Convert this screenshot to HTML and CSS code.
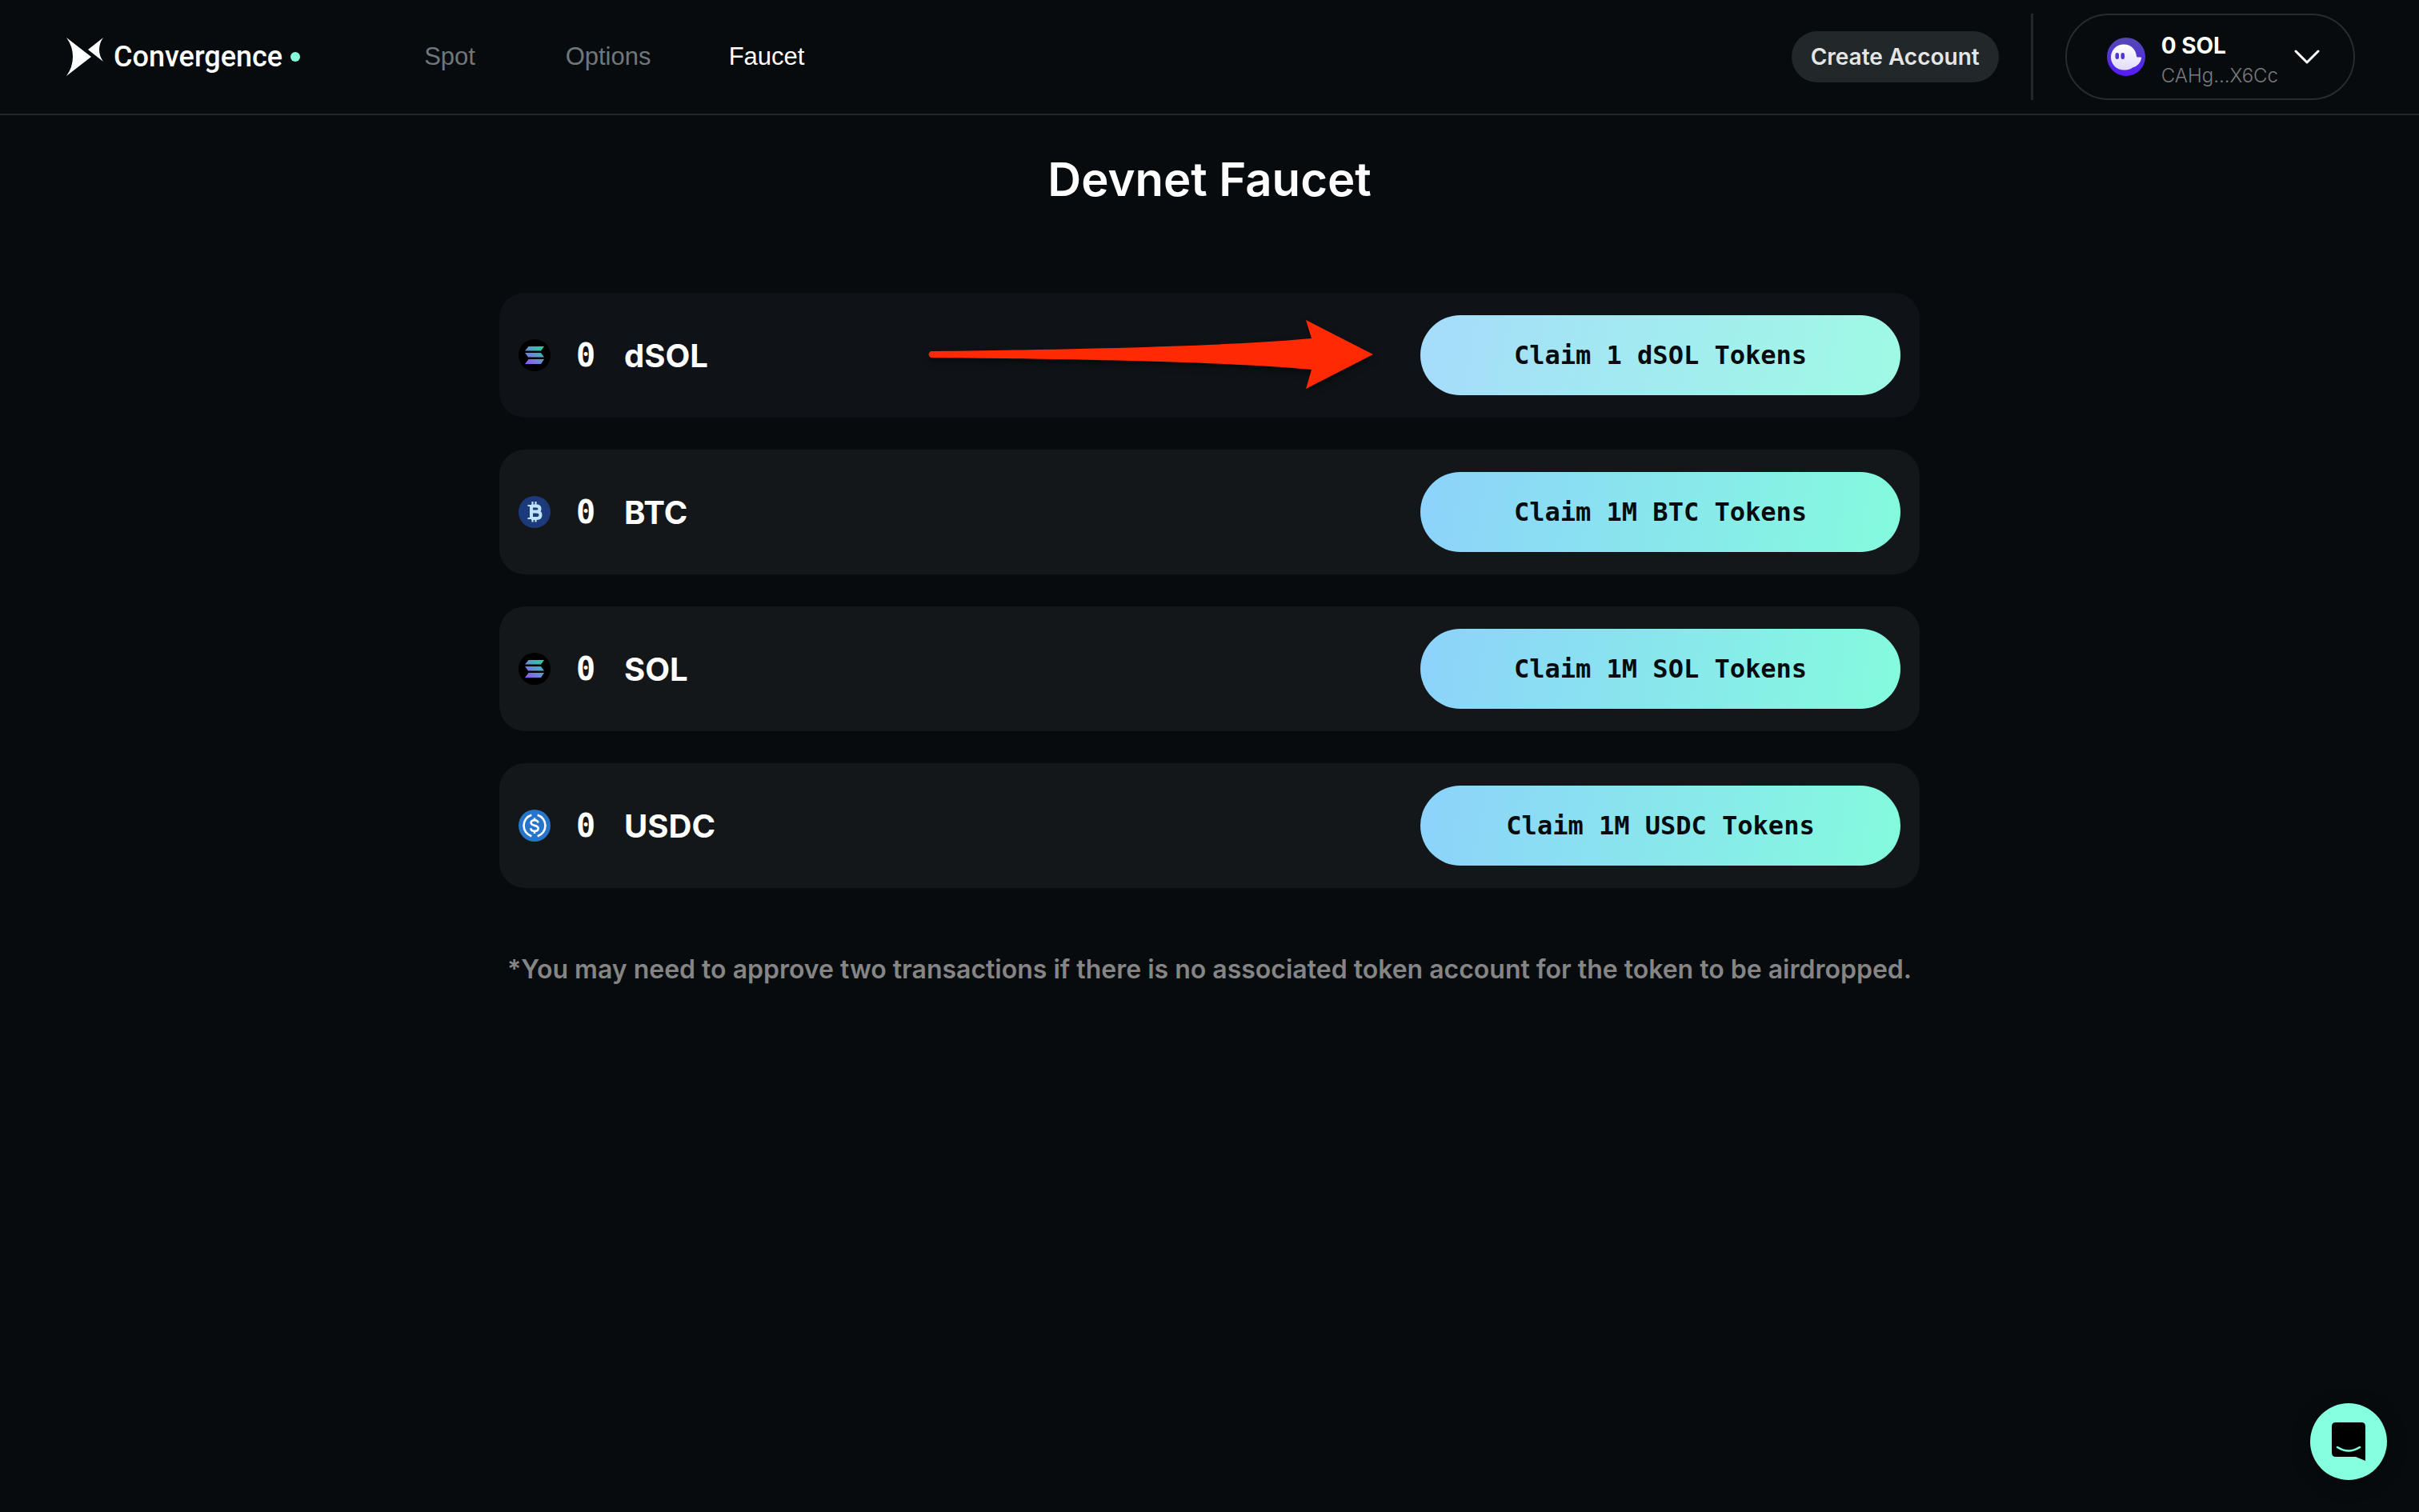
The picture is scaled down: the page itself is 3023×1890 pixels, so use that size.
FILE: index.html
```html
<!DOCTYPE html>
<html lang="en">
<head>
<meta charset="utf-8">
<meta name="viewport" content="width=device-width, initial-scale=1">
<title>Convergence – Faucet</title>
<link rel="stylesheet" href="styles.css">
</head>
<body>
<svg class="defs" width="0" height="0" aria-hidden="true">
  <defs>
    <linearGradient id="sol-grad" gradientUnits="userSpaceOnUse" x1="30" y1="8" x2="10" y2="32">
      <stop offset="0" stop-color="#19d99b"/><stop offset=".5" stop-color="#6393cf"/><stop offset="1" stop-color="#8f53f4"/>
    </linearGradient>
    <symbol id="icon-sol" viewBox="0 0 40 40">
      <circle cx="20" cy="20" r="20" fill="#000"/>
      <path fill="url(#sol-grad)" d="M12.500 9H32l-4 5.500H8zM8 17h20l4 5.500H12zM12.500 25H32l-4 6H8z"/>
    </symbol>
  </defs>
</svg>
<header class="header">
  <a class="brand" href="#">
    <svg class="brand-mark" viewBox="0 0 46 48" aria-hidden="true">
      <path fill="#fff" d="M0 0 31 24 0 48Q8 37 8 24T0 0zM46 0 27 15 46 30Q41 23 41 15T46 0z"/>
    </svg>
    <span class="brand-name">Convergence</span>
    <span class="brand-dot"></span>
  </a>
  <nav class="nav">
    <a class="nav-link" href="#">Spot</a>
    <a class="nav-link" href="#">Options</a>
    <a class="nav-link nav-link-active" href="#">Faucet</a>
  </nav>
  <div class="account">
    <button class="create-button" type="button">Create Account</button>
    <span class="divider"></span>
    <button class="wallet" type="button">
      <svg class="wallet-icon" viewBox="0 0 48 48" aria-hidden="true">
        <defs>
          <linearGradient id="wallet-bg" x1="0" y1="0" x2="0" y2="1"><stop offset="0" stop-color="#534bb1"/><stop offset="1" stop-color="#551bf9"/></linearGradient>
          <linearGradient id="wallet-ghost" x1="0" y1="0" x2="0" y2="1"><stop offset="0" stop-color="#fff"/><stop offset="1" stop-color="#e2dbfc"/></linearGradient>
        </defs>
        <circle cx="24" cy="24" r="24" fill="url(#wallet-bg)"/>
        <path fill="url(#wallet-ghost)" d="M21 8.500C31 8.500 36.500 16 37 23.500q.200 1 1.200 1h3.800q1.300 0 1.100 1.300C42 32 37 36.500 32.500 37.200 29 40 25 40.500 21.500 40.500 11.500 40.500 5 33 5 24.500S11.500 8.500 21 8.500z"/>
        <rect x="10.500" y="19" width="4.500" height="8" rx="2.200" fill="#5335d6"/>
        <rect x="17.500" y="19" width="4.500" height="8" rx="2.200" fill="#5335d6"/>
      </svg>
      <span class="wallet-text">
        <span class="wallet-balance">0 SOL</span>
        <span class="wallet-address">CAHg...X6Cc</span>
      </span>
      <svg class="wallet-chevron" viewBox="0 0 32 18" aria-hidden="true">
        <path d="M2 2 16 16 30 2" fill="none" stroke="#fff" stroke-width="3" stroke-linecap="round" stroke-linejoin="round"/>
      </svg>
    </button>
  </div>
</header>
<main class="faucet">
  <h1 class="title">Devnet Faucet</h1>
  <ul class="tokens">
    <li class="token token-highlight">
      <svg class="token-icon" aria-hidden="true"><use href="#icon-sol"/></svg>
      <span class="token-amount">0</span>
      <span class="token-name">dSOL</span>
      <button class="claim claim-hover" type="button">Claim 1 dSOL Tokens</button>
      <svg class="arrow" viewBox="0 0 556 86" aria-hidden="true">
        <path fill="#ff2a04" d="M3 39Q350 35 479 23L472 0 556 43 472 86 479 62Q350 50 3 47-2 43 3 39z"/>
      </svg>
    </li>
    <li class="token">
      <svg class="token-icon" viewBox="0 0 40 40" aria-hidden="true">
        <circle cx="20" cy="20" r="20" fill="#1d3a7a"/>
        <path fill="none" stroke="#bfe4fb" stroke-width="4" d="M16 11v17M16 12.500h6.500q4 0 4 3.500t-4 3.500H16M22 19.500q5.500 0 5.500 4.200t-5 4.300H16"/>
        <path fill="none" stroke="#bfe4fb" stroke-width="2.200" d="M11.500 12H18M11.500 28H18M17.500 7v5M21.500 7v5M17.500 28v4.500M21.500 28v4.500"/>
      </svg>
      <span class="token-amount">0</span>
      <span class="token-name">BTC</span>
      <button class="claim" type="button">Claim 1M BTC Tokens</button>
    </li>
    <li class="token">
      <svg class="token-icon" aria-hidden="true"><use href="#icon-sol"/></svg>
      <span class="token-amount">0</span>
      <span class="token-name">SOL</span>
      <button class="claim" type="button">Claim 1M SOL Tokens</button>
    </li>
    <li class="token">
      <svg class="token-icon" viewBox="0 0 40 40" aria-hidden="true">
        <circle cx="20" cy="20" r="20" fill="#2775ca"/>
        <path fill="none" stroke="#fff" stroke-width="2.600" d="M16.300 6.800a13.800 13.800 0 0 0 0 26.400M23.700 6.800a13.800 13.800 0 0 1 0 26.400M24.300 16.500c0-2-1.600-3.200-4.300-3.200s-4.400 1.200-4.400 3.200c0 4.700 9 2 9 7 0 2.200-1.800 3.400-4.600 3.400s-4.700-1.300-4.700-3.600M20 10.500v3M20 26.500v3.500"/>
      </svg>
      <span class="token-amount">0</span>
      <span class="token-name">USDC</span>
      <button class="claim" type="button">Claim 1M USDC Tokens</button>
    </li>
  </ul>
  <p class="note">*You may need to approve two transactions if there is no associated token account for the token to be airdropped.</p>
</main>
<button class="chat" type="button" aria-label="Open chat">
  <svg class="chat-icon" viewBox="0 0 42 48" aria-hidden="true">
    <path fill="#000" d="M5 0h32q5 0 5 5v43L30 43H5q-5 0-5-5V5q0-5 5-5z"/>
    <path fill="none" stroke="#86ffdf" stroke-width="2.600" stroke-linecap="round" d="M7 31q14 9 28 0"/>
  </svg>
</button>
</body>
</html>
```
FILE: styles.css
```css
* { box-sizing: border-box; }

body {
  margin: 0;
  min-height: 100vh;
  background: #070b0e;
  color: #fff;
  font-family: Inter, "Liberation Sans", sans-serif;
}

button {
  border: 0;
  font-family: inherit;
  cursor: pointer;
}

.defs { position: absolute; }

.header {
  display: flex;
  align-items: center;
  height: 144px;
  padding: 0 80px 0 82px;
  border-bottom: 2px solid #22272a;
}

.brand {
  display: flex;
  align-items: center;
  color: #fff;
  text-decoration: none;
}

.brand-mark {
  width: 48px;
  height: 48px;
  margin-right: 12px;
}

.brand-name {
  font-family: Roboto, sans-serif;
  font-size: 36px;
  font-weight: 500;
}

.brand-dot {
  width: 12px;
  height: 12px;
  margin-left: 10px;
  border-radius: 50%;
  background: #86ffdf;
}

.nav {
  display: grid;
  grid-template-columns: repeat(3, 198px);
  margin-left: 88px;
  text-align: center;
}

.nav-link {
  color: #6f777b;
  font-family: "Liberation Sans", Arial, sans-serif;
  font-size: 31px;
  text-decoration: none;
}

.nav-link-active { color: #fff; }

.account {
  display: flex;
  align-items: center;
  gap: 40px;
  margin-left: auto;
}

.create-button {
  height: 64px;
  padding: 0 24px;
  border-radius: 32px;
  background: #22272a;
  color: #e3e6e5;
  font-size: 28px;
  font-weight: 600;
}

.divider {
  width: 3px;
  height: 108px;
  background: #22272a;
}

.wallet {
  display: flex;
  align-items: center;
  height: 108px;
  padding: 0 42px 0 50px;
  border: 2px solid #262c2f;
  border-radius: 54px;
  background: none;
  color: #fff;
  text-align: left;
}

.wallet-icon {
  width: 48px;
  height: 48px;
  margin-right: 20px;
}

.wallet-text {
  display: flex;
  flex-direction: column;
  padding-top: 10px;
}

.wallet-balance {
  font-size: 28px;
  font-weight: 700;
  line-height: 38px;
}

.wallet-address {
  color: #777b7e;
  font-size: 24px;
  font-weight: 300;
  line-height: 38px;
}

.wallet-chevron {
  width: 32px;
  height: 18px;
  margin-left: 20px;
}

.faucet {
  max-width: 1775px;
  margin: 0 auto;
}

.title {
  margin: 48px 0 110px;
  font-size: 58px;
  font-weight: 600;
  line-height: 64px;
  text-align: center;
}

.tokens {
  display: grid;
  gap: 40px;
  margin: 0;
  padding: 0;
  list-style: none;
}

.token {
  position: relative;
  display: flex;
  align-items: center;
  padding: 28px 24px;
  border-radius: 32px;
  background: #131719;
}

.token-highlight { background: #0f1317; }

.token-icon {
  width: 40px;
  height: 40px;
}

.token-amount {
  margin-left: 32px;
  font-family: "DejaVu Sans Mono", monospace;
  font-size: 40px;
  font-weight: 700;
}

.token-name {
  margin-left: 36px;
  font-size: 40px;
  font-weight: 700;
}

.claim {
  width: 600px;
  height: 100px;
  margin-left: auto;
  border-radius: 50px;
  background: linear-gradient(100deg, #8dd2fb, #84fbdd);
  color: #070b0e;
  font-family: "DejaVu Sans Mono", monospace;
  font-size: 32px;
  font-weight: 700;
}

.claim-hover { background: linear-gradient(100deg, #a5dcfb, #9ffae4); }

.arrow {
  position: absolute;
  top: 34px;
  right: 683px;
  width: 556px;
  height: 86px;
  filter: drop-shadow(0 4px 4px rgb(0 0 0 / 50%));
}

.note {
  margin: 82px 0 0;
  color: #858585;
  font-size: 32px;
  font-weight: 600;
  line-height: 40px;
  text-align: center;
}

.chat {
  position: fixed;
  right: 40px;
  bottom: 40px;
  display: grid;
  place-items: center;
  width: 96px;
  height: 96px;
  padding: 0;
  border-radius: 50%;
  background: #86ffdf;
  box-shadow: 0 4px 24px rgb(0 0 0 / 30%);
}

.chat-icon {
  width: 42px;
  height: 48px;
}
```
